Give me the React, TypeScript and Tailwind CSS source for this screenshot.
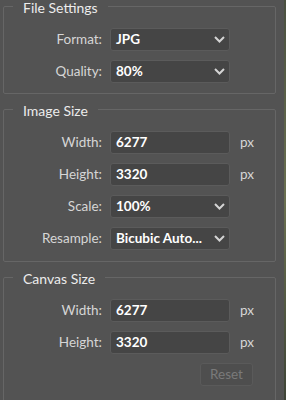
import React from 'react';

const font = { fontFamily: 'Lato, "Noto Sans", sans-serif' };

function Chevron() {
  return (
    <svg width="11" height="7" viewBox="0 0 11 7" className="shrink-0">
      <polyline points="1,1 5.5,5.5 10,1" fill="none" stroke="#d4d4d4" strokeWidth="2" />
    </svg>
  );
}

function Select({ value }: { value: string }) {
  return (
    <div className="ml-[8px] w-[120px] h-[23px] flex items-center justify-between pl-[5px] pr-[4px] bg-[#454545] border border-[#5b5b5b] rounded-[3px]">
      <span className="text-[13.5px] font-bold text-white leading-none">{value}</span>
      <Chevron />
    </div>
  );
}

function Field({ value }: { value: string }) {
  return (
    <>
      <div className="ml-[8px] w-[120px] h-[23px] flex items-center pl-[5px] bg-[#454545] border border-[#5b5b5b] rounded-[3px]">
        <span className="text-[13.5px] font-bold text-white leading-none">{value}</span>
      </div>
      <span className="ml-[10px] text-[13.5px] text-[#d6d6d6] leading-none">px</span>
    </>
  );
}

function Row({ label, children }: { label: string; children: React.ReactNode }) {
  return (
    <div className="flex items-center h-[23px]">
      <span className="w-[98px] text-right text-[13.5px] text-[#d6d6d6] leading-none">{label}</span>
      {children}
    </div>
  );
}

function Group({
  title,
  className,
  children,
}: {
  title: string;
  className?: string;
  children: React.ReactNode;
}) {
  return (
    <fieldset className={`shrink-0 ml-[3px] w-[273px] border border-[#666666] rounded-[2px] p-0 ${className ?? ''}`}>
      <legend className="ml-[9px] px-[10px] pt-[4px] text-[14px] leading-[18px] text-[#ececec]">{title}</legend>
      <div className="flex flex-col gap-[9px] pt-[11px]">{children}</div>
    </fieldset>
  );
}

export default function App() {
  return (
    <div className="w-[286px] h-[400px] flex overflow-hidden bg-[#535353]" style={font}>
      <div className="w-[284px] flex flex-col">
        {/* File Settings */}
        <Group title="File Settings" className="-mt-[5px] pb-[10px]">
          <Row label="Format:">
            <Select value="JPG" />
          </Row>
          <Row label="Quality:">
            <Select value="80%" />
          </Row>
        </Group>

        {/* Image Size */}
        <Group title="Image Size" className="mt-[4px] pb-[11px]">
          <Row label="Width:">
            <Field value="6277" />
          </Row>
          <Row label="Height:">
            <Field value="3320" />
          </Row>
          <Row label="Scale:">
            <Select value="100%" />
          </Row>
          <Row label="Resample:">
            <Select value="Bicubic Auto..." />
          </Row>
        </Group>

        {/* Canvas Size */}
        <Group title="Canvas Size" className="mt-[4px] pb-[40px]">
          <Row label="Width:">
            <Field value="6277" />
          </Row>
          <Row label="Height:">
            <Field value="3320" />
          </Row>
          <div className="flex justify-end h-[23px] mr-[22px]">
            <button className="w-[53px] h-[23px] flex items-center justify-center bg-[#4e4e4e] border border-[#5a5a5a] rounded-[3px] text-[13.5px] text-[#7a7a7a] leading-none">
              Reset
            </button>
          </div>
        </Group>
      </div>
      <div className="w-[2px] bg-gradient-to-b from-[#4a5040] via-[#6a7050] to-[#3e4436]" />
    </div>
  );
}
